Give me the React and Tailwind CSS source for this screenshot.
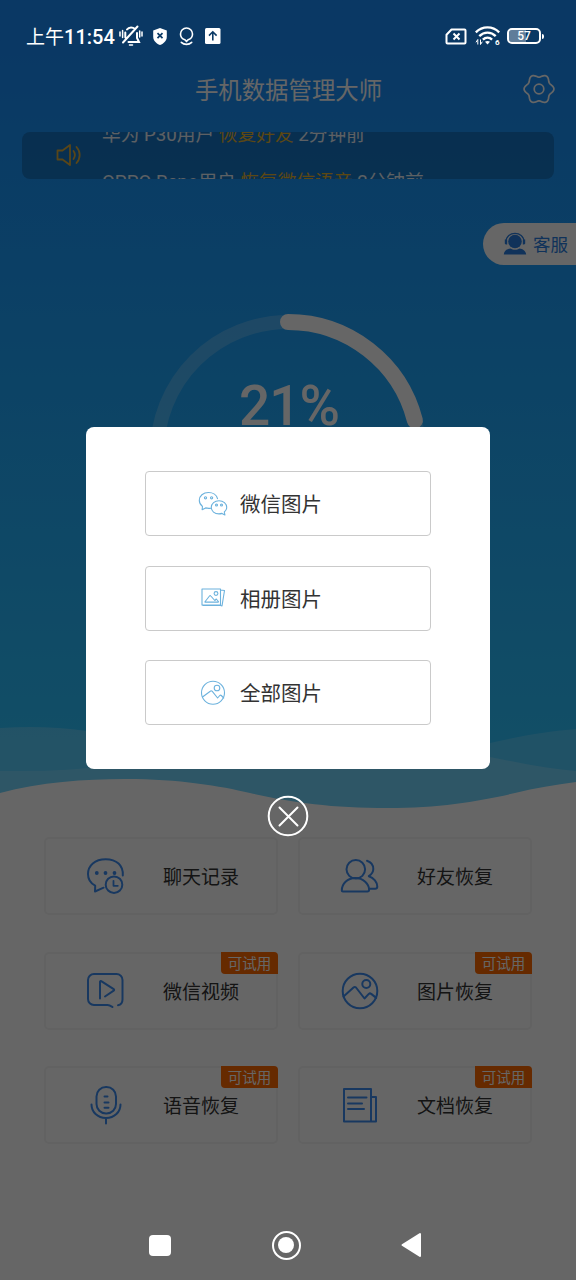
const notices = [
  { user: '华为 P30用户', action: '恢复好友', time: '2分钟前' },
  { user: 'OPPO Reno用户', action: '恢复微信语音', time: '2分钟前' },
];

const features = [
  { name: '聊天记录', icon: ChatIcon, trial: false },
  { name: '好友恢复', icon: FriendsIcon, trial: false },
  { name: '微信视频', icon: VideoIcon, trial: true },
  { name: '图片恢复', icon: PictureIcon, trial: true },
  { name: '语音恢复', icon: MicIcon, trial: true },
  { name: '文档恢复', icon: DocumentIcon, trial: true },
];

const sources = [
  { name: '微信图片', icon: WechatIcon },
  { name: '相册图片', icon: AlbumIcon },
  { name: '全部图片', icon: AllPicturesIcon },
];

// Six rounded lobes, one pointing right
const gearPoints = Array.from({ length: 90 }, (_, i) => {
  const angle = (i * Math.PI) / 45;
  const radius = 13.4 + 1.5 * Math.cos(6 * angle);
  return `${(16 + radius * Math.cos(angle)).toFixed(2)},${(16 + radius * Math.sin(angle)).toFixed(2)}`;
}).join(' ');

function FeatureSvg({ children }) {
  return (
    <svg className="w-10 h-10 shrink-0" viewBox="0 0 40 40" fill="none" stroke="#3d8cf0" strokeWidth="2" strokeLinecap="round" strokeLinejoin="round">
      {children}
    </svg>
  );
}

function ChatIcon() {
  return (
    <FeatureSvg>
      <path d="M36.800 19.500C37.500 9.500 30.500 3.200 19.700 3.200S2 9.500 2 18c0 5.300 2.600 9.300 7.200 11.700L9 35.500l8.600-3.800" />
      <circle cx="28" cy="28.700" r="8.300" />
      <path d="M27.500 24.800v5h4.300" strokeWidth="1.800" />
      <g fill="#3d8cf0" stroke="none">
        <circle cx="10.800" cy="17" r="1.900" />
        <circle cx="19.500" cy="17" r="1.900" />
        <circle cx="28.500" cy="17" r="1.900" />
      </g>
    </FeatureSvg>
  );
}

function FriendsIcon() {
  return (
    <FeatureSvg>
      <circle cx="15.800" cy="13.300" r="9.300" />
      <path d="M1.800 34.500c0-6.500 5.500-12.500 13.500-12.500s13.800 6 13.800 11.800c0 1-.7 1.700-1.700 1.700H2.800c-.6 0-1-.4-1-1Z" />
      <path d="M27 4.700c4 1.300 6.300 4.500 6.300 8.300 0 3-1.500 5.300-4.500 7.200 5 1.500 8.500 6.200 8.500 10.300 0 1.500-.8 2.300-2.200 2.300h-5.500" />
    </FeatureSvg>
  );
}

function VideoIcon() {
  return (
    <FeatureSvg>
      <path d="M26.500 36c-2-1.300-3-2-5-2H8a6 6 0 0 1-6-6V9a6 6 0 0 1 6-6h22.500a6 6 0 0 1 6 6v19.500c0 3-1.800 5.300-4.500 5.800" />
      <path d="M14 27.500V10.800c0-.7.6-1 1.200-.6l12.500 8c.6.4.6 1 0 1.400L19 25.500" />
    </FeatureSvg>
  );
}

function PictureIcon() {
  return (
    <FeatureSvg>
      <circle cx="20" cy="20" r="17.300" />
      <circle cx="26.300" cy="13" r="4" />
      <path d="M3.500 25.500l10-9c1-.9 1.500-.9 2.500 0l8.500 11 4.300-4.600c.8-.7 1.600-.7 2.400 0l5 4" />
    </FeatureSvg>
  );
}

function MicIcon() {
  return (
    <FeatureSvg>
      <rect x="10.500" y="2" width="19.500" height="26.500" rx="9.500" />
      <path d="M5.500 19.500c0 7.500 6 13.500 14.500 13.500s14.500-6 14.500-13.500M20 33v5.500" />
      <path d="M18.500 11.500h3M18.500 17.500h4M18.500 22.800h4" />
    </FeatureSvg>
  );
}

function DocumentIcon() {
  return (
    <FeatureSvg>
      <path d="M4 4h27v32.500H4ZM31 12h5v24.500h-5" />
      <path d="M8 12.500h18.500M8 18.500h14M8 24h16" />
    </FeatureSvg>
  );
}

function SourceSvg({ children }) {
  return (
    <svg className="w-[30px] h-[30px] shrink-0" viewBox="0 0 30 30" fill="none" stroke="#6cb2dd" strokeWidth="1.100" strokeLinecap="round" strokeLinejoin="round">
      {children}
    </svg>
  );
}

function WechatIcon() {
  return (
    <SourceSvg>
      <path d="M19.500 9.700C18.700 6 15 3.500 10.500 3.500 5.200 3.500 1.300 7 1.300 11.300c0 2.600 1.300 4.800 3.200 6.200l-.4 3.300 3.500-1.900c1.700.5 3.500.6 5.300.3" />
      <path d="M26.300 23c1.600-1.200 2.400-2.800 2.400-4.700 0-3.800-3.400-6.600-7.700-6.600s-7.700 2.800-7.700 6.600c0 3.900 3.300 6.600 7.700 6.600 1 0 2-.2 3-.5l2.900 1.500Z" />
      <circle cx="7.500" cy="8.800" r="1.100" />
      <circle cx="13.600" cy="8.800" r="1.100" />
      <circle cx="18.500" cy="16" r="1" />
      <circle cx="23.500" cy="16" r="1" />
    </SourceSvg>
  );
}

function AlbumIcon() {
  return (
    <SourceSvg>
      <path d="M4 6h18.500v16H4ZM22.500 7l4 .5-2.500 15.500-1.500-.5H5" />
      <circle cx="18" cy="10.500" r="1.900" />
      <path d="M6.800 19l4.700-6c.4-.5.9-.5 1.300 0l4 4.500 1.500-1.500 2.100 2.500c.2.300 0 .6-.3.600H7.100Z" />
    </SourceSvg>
  );
}

function AllPicturesIcon() {
  return (
    <SourceSvg>
      <circle cx="15" cy="14.700" r="11.500" />
      <circle cx="19" cy="10" r="2.800" />
      <path d="M4.500 19l7.800-5.800c.6-.5 1.200-.5 1.800 0l5.500 6.800 2.200-2.500c.6-.5 1-.5 1.500 0l2.400 2.500" />
    </SourceSvg>
  );
}

function StatusBar() {
  return (
    <div className="relative z-20 h-16 pt-2 pl-[26px] pr-8 flex items-center justify-between text-white">
      <div className="flex items-center">
        <span className="pt-[3px] text-[19px] leading-6">上午</span>
        <span className="pt-[2px] text-[20px] leading-6 font-medium">11:54</span>
        <svg className="ml-[4px] w-6 h-[22px]" viewBox="0 0 24 22" fill="none" stroke="currentColor" strokeWidth="2" strokeLinecap="round">
          <path d="M8 4.500C9 3 10.300 2.400 12 2.400c1.600 0 2.900.5 3.900 1.500M18 8v5l2 4H9.500M6.300 7.500v5M18.500 1.500L4 17.500" />
          <path d="M1 7v4M3.600 5.500v7M23 7v4M20.700 6v6M10.500 20h3" strokeWidth="1.500" />
        </svg>
        <svg className="ml-[10px] w-[14px] h-[17px]" viewBox="0 0 14 17">
          <path d="M7 0l6.800 2.500v6.300c0 4-3 6.900-6.800 8.200C3.200 15.700.2 12.800.2 8.800V2.500Z" fill="currentColor" />
          <path d="M4.500 5.200l5 5M9.500 5.200l-5 5" stroke="#0b3a66" strokeWidth="1.700" />
        </svg>
        <svg className="ml-[12px] w-[15px] h-[19px]" viewBox="0 0 15 19" fill="none" stroke="currentColor" strokeWidth="1.600" strokeLinecap="round">
          <path d="M5.800 12.700C3.200 11.900 1.500 9.700 1.500 7a6 6 0 1 1 12 0c0 2.700-1.700 4.900-4.300 5.700L7.500 14.400Z" />
          <path d="M2.300 15.300c2.800 2.700 7.600 2.700 10.400 0" />
        </svg>
        <svg className="ml-[11px] w-[16px] h-[16px]" viewBox="0 0 16 16">
          <rect width="15.500" height="16" rx="1.500" fill="currentColor" />
          <path d="M7.800 12.500V4M4 7.600L7.800 3.800l3.800 3.800" stroke="#0b3a66" strokeWidth="1.600" fill="none" />
        </svg>
      </div>
      <div className="flex items-center">
        <svg className="w-[22px] h-[17px]" viewBox="0 0 22 17" fill="none" stroke="currentColor" strokeWidth="2" strokeLinejoin="round">
          <path d="M6.500 1.500H19.500a1 1 0 0 1 1 1V14.500a1 1 0 0 1-1 1H2.500a1 1 0 0 1-1-1V6.800Z" />
          <path d="M8.500 5.500l6 6M14.500 5.500l-6 6" />
        </svg>
        <svg className="ml-[8px] w-[25px] h-[20px]" viewBox="0 0 25 20" fill="none" stroke="currentColor" strokeWidth="2.400">
          <path d="M.8 6.300c6.600-6.600 16.800-6.600 23.400 0M4.300 10.100c4.700-4.600 11.700-4.600 16.400 0M7.900 13.600c2.700-2.600 6.500-2.600 9.200 0" />
          <path d="M10 15.800L12.500 18.600l2.500-2.800c-1.400-1.100-3.600-1.100-5 0Z" fill="currentColor" stroke="none" />
          <path d="M2.800 18.500v-5l-1.800 2.800M5.500 13.500v5l1.800-2.800" strokeWidth="1" />
          <text x="20" y="18.500" fontSize="8" fontWeight="700" fill="currentColor" stroke="none">6</text>
        </svg>
        <div className="ml-[7px] relative w-[34px] h-4 border-2 border-white rounded-[5px] overflow-hidden flex items-center justify-center">
          <div className="absolute left-0 inset-y-0 w-[17px] bg-white/35"></div>
          <span className="relative text-[12px] leading-3 font-medium">57</span>
        </div>
        <div className="ml-px w-[2px] h-[5px] rounded-r bg-white"></div>
      </div>
    </div>
  );
}

function Header() {
  return (
    <div className="h-[50px] pl-[54px] pr-[21px] flex items-center justify-between">
      <h1 className="flex-1 pt-[5px] text-center text-[23.4px] text-white">手机数据管理大师</h1>
      <svg className="w-8 h-8" viewBox="0 0 32 32" fill="none" stroke="#fff" strokeWidth="1.700" strokeLinejoin="round">
        <polygon points={gearPoints} />
        <circle cx="16" cy="16" r="4.800" />
      </svg>
    </div>
  );
}

function NoticeBar() {
  return (
    <div className="mt-[18px] mx-[22px] h-[47px] flex rounded-[8px] bg-black/20 overflow-hidden">
      <svg className="mt-[11px] ml-[34px] mr-[20px] w-[26px] h-[24px] shrink-0" viewBox="0 0 26 24" fill="none" stroke="#dfae3c" strokeWidth="1.800" strokeLinejoin="round" strokeLinecap="round">
        <path d="M1.500 7.500h5l7.500-5.500v20l-7.500-5.500h-5Z" />
        <path d="M17.500 8c1.700 2.400 1.700 5.600 0 8M20.500 4c4.200 4.700 4.200 11.300 0 16" />
      </svg>
      <div className="-mt-[20px]">
        {notices.map((notice) => (
          <p key={notice.user} className="h-[47px] leading-[47px] text-[18.700px] text-white/90 whitespace-nowrap">
            {notice.user} <span className="text-[#e5b430]">{notice.action}</span> {notice.time}
          </p>
        ))}
      </div>
    </div>
  );
}

function ServiceTab() {
  return (
    <div className="mt-[44px] ml-auto w-[93px] h-[42px] pl-5 flex items-center rounded-l-full bg-white text-[#2a7ee0]">
      <svg className="w-6 h-6 shrink-0" viewBox="0 0 24 24">
        <circle cx="12" cy="9.500" r="6.800" fill="currentColor" />
        <path d="M3 10C3 -1.500 21 -1.500 21 10" fill="none" stroke="currentColor" strokeWidth="1.300" />
        <path d="M1.800 7.500h2.400v5H3c-.8 0-1.200-.5-1.200-1.200ZM22.200 7.500h-2.400v5H21c.8 0 1.200-.5 1.200-1.200ZM.8 22.500c.5-4 3.500-5.500 6.700-6 2.500 1.800 6.500 1.800 9 0 3.200.5 6.200 2 6.700 6Z" fill="currentColor" />
      </svg>
      <span className="pt-[2px] ml-[6px] text-[17.500px] whitespace-nowrap">客服</span>
    </div>
  );
}

function Gauge({ percent }) {
  const length = 2 * Math.PI * 131;
  return (
    <div className="mt-[48px] mx-auto w-[280px] h-[280px] grid">
      <svg className="col-start-1 row-start-1" viewBox="0 0 280 280" fill="none">
        <circle cx="140" cy="140" r="131" stroke="#fff" strokeOpacity="0.2" strokeWidth="14" />
        <circle
          cx="140"
          cy="140"
          r="131"
          stroke="#fff"
          strokeWidth="16"
          strokeLinecap="round"
          strokeDasharray={`${(length * percent) / 100} ${length}`}
          transform="rotate(-90 140 140)"
        />
      </svg>
      <p className="col-start-1 row-start-1 pt-[58px] pl-[2px] text-center text-[55px] leading-[70px] tracking-[-1px] font-medium text-white">{percent}%</p>
    </div>
  );
}

function Waves() {
  return (
    <svg className="mt-auto w-full h-[100px] shrink-0" viewBox="0 720 576 100" preserveAspectRatio="none">
      <path d="M0 728C30 726 60 727 87 731C190 748 250 775 340 762C400 750 450 750 490 757C520 763 550 769 576 771V820H0Z" fill="#fff" fillOpacity="0.200" />
      <path d="M0 771C30 771 60 771 87 768C200 752 250 742 330 757C390 765 440 755 490 743C520 736 550 731 576 729V820H0Z" fill="#fff" fillOpacity="0.170" />
      <path d="M0 793C40 782 85 779 125 779C180 779 220 786 250 793C290 802 330 808 388 808C440 808 480 801 515 793C535 788 555 785 576 782V820H0Z" fill="#fff" />
    </svg>
  );
}

function FeatureCard({ feature }) {
  const Icon = feature.icon;
  return (
    <div className="relative h-[78px] pl-[40px] flex items-center rounded-[5px] border-2 border-[#f5f5f5]">
      <Icon />
      <span className="pt-[5px] ml-[37px] text-[19px] text-[#333]">{feature.name}</span>
      {feature.trial && (
        <span className="absolute -top-[2px] -right-[2px] w-[57px] h-[22px] pt-[2px] rounded-tr-[4px] rounded-bl-[4px] bg-[#ff6900] text-center text-[14.500px] leading-[22px] text-white">
          可试用
        </span>
      )}
    </div>
  );
}

function NavBar() {
  return (
    <div className="relative z-20 mt-auto h-[70px] pl-[149px] pr-[154px] flex items-center justify-between text-white">
      <div className="w-[22px] h-[21px] rounded-[4px] bg-white"></div>
      <div className="ml-px w-[29px] h-[29px] rounded-full border-[2.500px] border-white flex items-center justify-center">
        <div className="w-[16px] h-[16px] rounded-full bg-white"></div>
      </div>
      <svg className="w-[22px] h-[26px]" viewBox="0 0 22 26">
        <path d="M2.500 13L20 2v22Z" fill="currentColor" stroke="currentColor" strokeWidth="2" strokeLinejoin="round" />
      </svg>
    </div>
  );
}

function SourceDialog() {
  return (
    <div className="absolute inset-0 z-10 pt-[427px] flex flex-col items-center bg-black/60">
      <div className="w-[404px] h-[342px] px-[59px] pt-[44px] flex flex-col gap-[29.500px] rounded-[8px] bg-white">
        {sources.map(({ name, icon: Icon }) => (
          <button key={name} className="h-[65px] pl-[52px] flex items-center rounded-[4px] border border-[#cacaca]">
            <Icon />
            <span className="pt-[4px] ml-[12px] text-[20.500px] text-[#333]">{name}</span>
          </button>
        ))}
      </div>
      <button className="mt-[26px] w-[42px] h-[42px]">
        <svg viewBox="0 0 42 42" fill="none" stroke="#fff" strokeWidth="2" strokeLinecap="round">
          <circle cx="21" cy="21" r="19.300" />
          <path d="M12.500 12.500l18 18M30.500 12.500l-18 18" />
        </svg>
      </button>
    </div>
  );
}

export default function App() {
  return (
    <div className="relative w-[576px] h-[1280px] flex flex-col overflow-hidden bg-white font-['Roboto','Noto_Sans_CJK_SC',sans-serif]">
      <div className="h-[820px] flex flex-col bg-linear-to-b from-[#198cfa] from-5% to-[#2dc3ff] to-90%">
        <StatusBar />
        <Header />
        <NoticeBar />
        <ServiceTab />
        <Gauge percent={21} />
        <Waves />
      </div>
      <div className="mt-[17px] ml-[44px] mr-[44px] grid grid-cols-2 gap-x-[20px] gap-y-[36.500px]">
        {features.map((feature) => (
          <FeatureCard key={feature.name} feature={feature} />
        ))}
      </div>
      <NavBar />
      <SourceDialog />
    </div>
  );
}
